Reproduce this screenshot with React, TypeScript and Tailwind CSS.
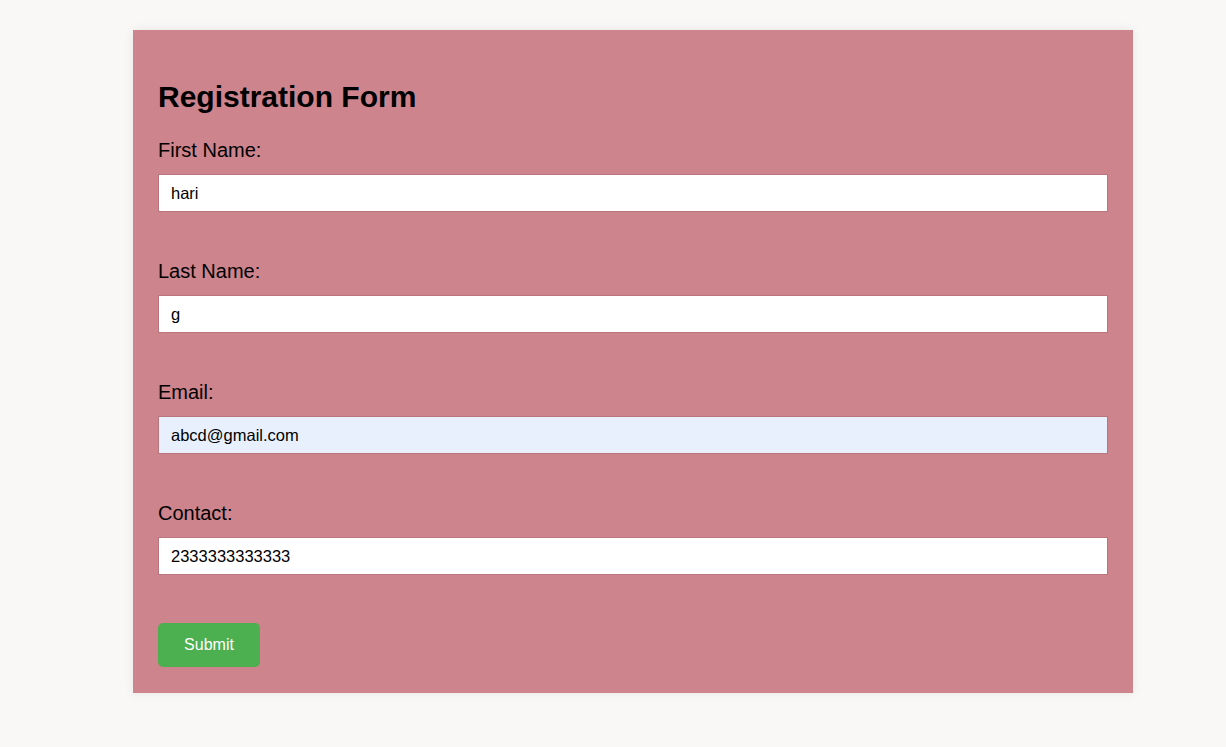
const FIELDS = [
  { label: "First Name:", value: "hari", type: "text" },
  { label: "Last Name:", value: "g", type: "text" },
  { label: "Email:", value: "abcd@gmail.com", type: "email", autofill: true },
  { label: "Contact:", value: "2333333333333", type: "text" },
];

export default function App() {
  return (
    <div className="min-h-screen bg-[#f9f8f6] pt-[30px] font-['Liberation_Sans',Arial,sans-serif] text-black">
      <form
        className="ml-[133px] w-[1000px] bg-[#cd848c] px-[25px] pt-[25px] pb-[26px] shadow-[0_0_10px_rgba(0,0,0,0.08)]"
        onSubmit={(e) => e.preventDefault()}
      >
        <h2 className="mt-[25px] mb-[25px] text-[30px] leading-[34px] font-bold">
          Registration Form
        </h2>

        {FIELDS.map((field) => (
          <div key={field.label} className="mb-[48px]">
            <label className="mb-[12px] block text-[20px] leading-[23px]">
              {field.label}
            </label>
            <input
              type={field.type}
              defaultValue={field.value}
              className={
                "block h-[38px] w-full border border-[#b9747c] px-[12px] text-[16.5px] text-black outline-none " +
                (field.autofill ? "bg-[#e8f0fe]" : "bg-white")
              }
            />
          </div>
        ))}

        <button
          type="submit"
          className="h-[44px] w-[102px] rounded-[5px] bg-[#4caf50] text-[16px] text-white"
        >
          Submit
        </button>
      </form>
    </div>
  );
}
